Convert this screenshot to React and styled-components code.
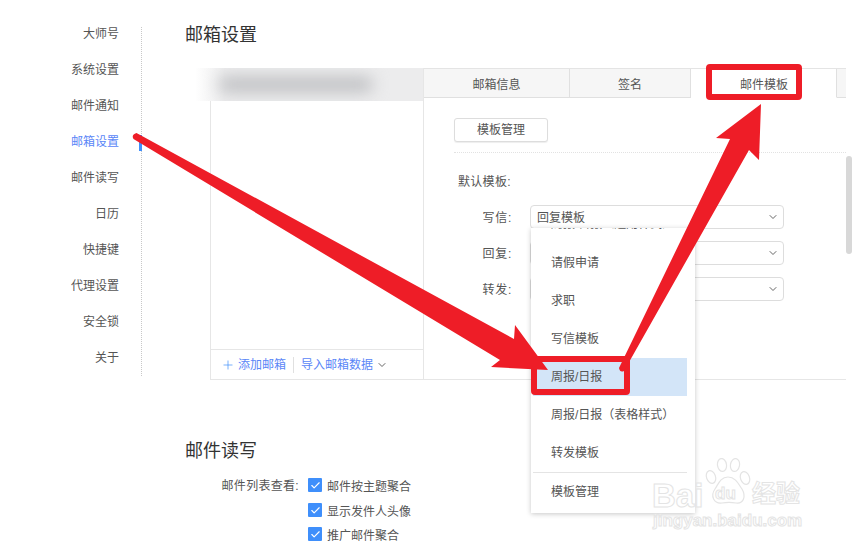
import React from 'react';
import styled, { createGlobalStyle } from 'styled-components';
import { ChevronDown, Plus, Check } from 'lucide-react';

const GlobalStyle = createGlobalStyle`
  html, body {
    margin: 0;
    padding: 0;
    background: #fff;
    overflow: hidden;
  }
  body {
    font-family: "Liberation Sans", "Noto Sans CJK SC", sans-serif;
    font-size: 12px;
    color: #555;
  }
`;

const Page = styled.div`
  position: relative;
  display: flex;
  align-items: flex-start;
  width: 852px;
  height: 550px;
  overflow: hidden;
`;

const Sidebar = styled.nav`
  display: flex;
  flex-direction: column;
  gap: 24px;
  flex: none;
  box-sizing: border-box;
  width: 142px;
  margin-top: 27px;
  padding: 0 22px 13px 0;
  border-right: 1px dotted #c8c8c8;
`;

const NavItem = styled.div`
  position: relative;
  height: 12px;
  line-height: 14px;
  text-align: right;
  color: ${(p) => (p.$active ? '#5a86f7' : '#555')};

  ${(p) =>
    p.$active &&
    `
    &::after {
      content: '';
      position: absolute;
      top: 0;
      right: -23px;
      width: 3px;
      height: 16px;
      background: #3f8ffb;
    }
  `}
`;

const Main = styled.main`
  flex: 1;
  padding: 26px 0 0 43px;
`;

const Title = styled.h2`
  margin: 0;
  height: 18px;
  line-height: 18px;
  font-size: 18px;
  font-weight: 400;
  color: #333;
`;

const Panel = styled.section`
  position: relative;
  display: flex;
  box-sizing: border-box;
  width: 636px;
  height: 312px;
  margin: 24px 0 62px 25px;
  border-bottom: 1px solid #e6e6e6;
`;

const AccountCol = styled.div`
  display: flex;
  flex-direction: column;
  justify-content: flex-end;
  flex: none;
  box-sizing: border-box;
  width: 214px;
  border-left: 1px solid #e6e6e6;
  border-right: 1px solid #e6e6e6;
`;

const BlurredAccount = styled.div`
  position: absolute;
  top: 0;
  left: -15px;
  width: 228px;
  height: 33px;
  overflow: hidden;
  background: linear-gradient(90deg, #fff 0, #ececed 30px, #ececed 100%);

  &::after {
    content: '';
    position: absolute;
    top: 9px;
    left: 24px;
    width: 154px;
    height: 15px;
    border-radius: 7px;
    background: #bdbec1;
    filter: blur(8px);
  }
`;

const AccountFooter = styled.div`
  display: flex;
  align-items: center;
  box-sizing: border-box;
  height: 30px;
  padding-left: 10px;
  border-top: 1px solid #e6e6e6;
  line-height: 16px;
  color: #5a86f7;
`;

const AddLabel = styled.span`
  margin-left: 3px;
  padding-right: 7px;
  border-right: 1px solid #e0e0e0;
`;

const ImportLabel = styled.span`
  margin-left: 7px;
  margin-right: 3px;
`;

const SettingsCol = styled.div`
  flex: 1;
  min-width: 0;
`;

const Tabs = styled.div`
  display: flex;
  box-sizing: border-box;
  height: 30px;
  border-top: 1px solid #e4e4e4;
`;

const Tab = styled.div`
  display: flex;
  align-items: center;
  justify-content: ${(p) => (p.$end ? 'flex-end' : 'center')};
  flex: ${(p) => (p.$width ? `0 0 ${p.$width}px` : 1)};
  box-sizing: border-box;
  padding-right: ${(p) => (p.$end ? '48px' : 0)};
  background: ${(p) => (p.$active ? '#fff' : '#f6f6f6')};
  border-right: 1px solid #e0e0e0;
  border-bottom: 1px solid ${(p) => (p.$active ? '#fff' : '#e0e0e0')};
  color: #555;

  &:last-child {
    border-right: 0;
  }
`;

const SettingsBody = styled.div`
  padding: 20px 0 0 30px;
`;

const GhostButton = styled.button`
  display: block;
  box-sizing: border-box;
  width: 94px;
  height: 24px;
  padding: 0 0 3px;
  border: 1px solid #ddd;
  border-radius: 3px;
  background: #fff;
  box-shadow: 0 1px 1px #eee;
  font: inherit;
  color: #555;
`;

const DottedRule = styled.div`
  margin-top: 10px;
  border-top: 1px dotted #e2e2e2;
`;

const FieldHeading = styled.div`
  margin: 21px 0 0 4px;
  height: 16px;
  line-height: 16px;
  letter-spacing: 0.3px;
  color: #555;
`;

const FieldList = styled.div`
  display: flex;
  flex-direction: column;
  gap: 12px;
  margin-top: 15px;
`;

const FieldRow = styled.div`
  display: flex;
  align-items: center;
`;

const FieldLabel = styled.label`
  box-sizing: border-box;
  width: 58px;
  margin-right: 18px;
  padding-bottom: 1px;
  text-align: right;
  letter-spacing: 0.7px;
  color: #555;
`;

const SelectBox = styled.div`
  position: relative;
  display: flex;
  align-items: center;
  justify-content: space-between;
  box-sizing: border-box;
  width: 254px;
  height: 24px;
  padding: 0 4px 0 6px;
  border: 1px solid #ddd;
  border-radius: 4px;
  background: #fff;
  color: #555;
`;

const SelectValue = styled.span`
  padding-bottom: 2px;
`;

const Dropdown = styled.div`
  position: absolute;
  z-index: 2;
  top: 22px;
  left: 0;
  box-sizing: border-box;
  width: 164px;
  height: 285px;
  padding: 0 8px 0 2px;
  overflow: hidden;
  background: #fff;
  box-shadow: 0 1px 5px rgba(0, 0, 0, 0.22);
`;

const OptionList = styled.div`
  height: 244px;
  overflow: hidden;
`;

const Option = styled.div`
  display: flex;
  align-items: center;
  box-sizing: border-box;
  height: 38px;
  padding: 0 0 3px 18px;
  background: ${(p) => (p.$active ? '#d3e5f8' : 'transparent')};
  color: #555;
  white-space: nowrap;
`;

const ClippedOption = styled(Option)`
  margin-top: -23px;
  margin-bottom: 1px;
`;

const DropdownDivider = styled.div`
  border-top: 1px solid #e4e4e4;
`;

const Scrollbar = styled.div`
  position: absolute;
  top: 156px;
  right: 0;
  width: 6px;
  height: 98px;
  border-radius: 3px;
  background: #d8d8d8;
`;

const CheckGroup = styled.div`
  display: grid;
  grid-template-columns: 114px auto;
  column-gap: 9px;
  row-gap: 10px;
  justify-content: start;
  margin-top: 18px;
  color: #555;
`;

const CheckLabel = styled.div`
  grid-column: 1;
  height: 14px;
  line-height: 14px;
  padding-top: 1px;
  text-align: right;
  letter-spacing: 0.3px;
`;

const CheckItem = styled.div`
  grid-column: 2;
  display: flex;
  align-items: center;
  gap: 5px;
  height: 14px;
  white-space: nowrap;
`;

const CheckBox = styled.span`
  display: flex;
  align-items: center;
  justify-content: center;
  width: 14px;
  height: 14px;
  border-radius: 1px;
  background: #3f8ffb;
  color: #fff;
`;

const Annotation = styled.svg`
  position: absolute;
  z-index: 5;
  top: 0;
  left: 0;
  pointer-events: none;
`;

const Watermark = styled.div`
  position: absolute;
  z-index: 6;
  top: 458px;
  left: 652px;
  width: 156px;
  height: 74px;
  pointer-events: none;
`;

const Paw = styled.svg`
  position: absolute;
  top: 0;
  left: 52px;
`;

const WatermarkLogo = styled.div`
  position: absolute;
  top: 18px;
  font-family: "Liberation Sans", sans-serif;
  font-size: ${(p) => p.$size}px;
  font-weight: 700;
  line-height: 1.2;
  left: ${(p) => p.$left}px;
  color: #fff;
  -webkit-text-stroke: 1px #e4e4e4;
  white-space: nowrap;
`;

const WatermarkDu = styled(WatermarkLogo)`
  top: 26px;
`;

const WatermarkCn = styled(WatermarkLogo)`
  top: 20px;
  font-family: "Noto Sans CJK SC", sans-serif;
`;

const WatermarkUrl = styled.div`
  position: absolute;
  top: 53px;
  left: 1px;
  font-family: "Liberation Sans", sans-serif;
  font-size: 17px;
  font-weight: 700;
  line-height: 20px;
  color: #fff;
  -webkit-text-stroke: 1px #e4e4e4;
  white-space: nowrap;
`;

const navItems = ['大师号', '系统设置', '邮件通知', '邮箱设置', '邮件读写', '日历', '快捷键', '代理设置', '安全锁', '关于'];
const options = ['请假申请', '求职', '写信模板', '周报/日报', '周报/日报（表格样式）', '转发模板'];
const checks = ['邮件按主题聚合', '显示发件人头像', '推广邮件聚合'];

function App() {
  return (
    <Page>
      <GlobalStyle />
      <Sidebar>
        {navItems.map((item) => (
          <NavItem key={item} $active={item === '邮箱设置'}>
            {item}
          </NavItem>
        ))}
      </Sidebar>

      <Main>
        <Title>邮箱设置</Title>
        <Panel>
          <BlurredAccount />
          <AccountCol>
            <AccountFooter>
              <Plus size={14} strokeWidth={1.2} color="#3f8ffb" />
              <AddLabel>添加邮箱</AddLabel>
              <ImportLabel>导入邮箱数据</ImportLabel>
              <ChevronDown size={12} color="#666" />
            </AccountFooter>
          </AccountCol>

          <SettingsCol>
            <Tabs>
              <Tab $width={146}>邮箱信息</Tab>
              <Tab $width={121}>签名</Tab>
              <Tab $width={146} $active $end>邮件模板</Tab>
              <Tab />
            </Tabs>
            <SettingsBody>
              <GhostButton>模板管理</GhostButton>
              <DottedRule />
              <FieldHeading>默认模板:</FieldHeading>
              <FieldList>
                <FieldRow>
                  <FieldLabel>写信:</FieldLabel>
                  <SelectBox>
                    <SelectValue>回复模板</SelectValue>
                    <ChevronDown size={12} color="#666" />
                    <Dropdown>
                      <OptionList>
                        <ClippedOption>周报/日报（通用样式）</ClippedOption>
                        {options.map((o) => (
                          <Option key={o} $active={o === '周报/日报'}>
                            {o}
                          </Option>
                        ))}
                      </OptionList>
                      <DropdownDivider />
                      <Option>模板管理</Option>
                    </Dropdown>
                  </SelectBox>
                </FieldRow>
                <FieldRow>
                  <FieldLabel>回复:</FieldLabel>
                  <SelectBox>
                    <span />
                    <ChevronDown size={12} color="#666" />
                  </SelectBox>
                </FieldRow>
                <FieldRow>
                  <FieldLabel>转发:</FieldLabel>
                  <SelectBox>
                    <span />
                    <ChevronDown size={12} color="#666" />
                  </SelectBox>
                </FieldRow>
              </FieldList>
            </SettingsBody>
          </SettingsCol>
        </Panel>

        <Title>邮件读写</Title>
        <CheckGroup>
          <CheckLabel>邮件列表查看:</CheckLabel>
          {checks.map((c) => (
            <CheckItem key={c}>
              <CheckBox>
                <Check size={11} strokeWidth={2.5} />
              </CheckBox>
              {c}
            </CheckItem>
          ))}
        </CheckGroup>
      </Main>

      <Scrollbar />

      <Annotation width="852" height="550" viewBox="0 0 852 550" fill="none">
        <rect x="534" y="359" width="93" height="33" rx="1" stroke="#ee1d27" strokeWidth="6" />
        <rect x="709" y="67" width="90" height="30" rx="1" stroke="#ee1d27" strokeWidth="6" />
        <path
          d="M136.5 133 L514 339 L515 325 L548 370 L491 367 L500 360 L133.5 139 Q131 135 136.5 133 Z"
          fill="#ee1d27"
        />
        <path
          d="M619 368 L730 139 L716 138 L761 104 L759 160 L749 150 L624 371 Q620 373 619 368 Z"
          fill="#ee1d27"
        />
      </Annotation>

      <Watermark>
        <Paw width="60" height="48" viewBox="0 0 60 48" fill="#fff" stroke="#e4e4e4" strokeWidth="1.2">
          <ellipse cx="7" cy="19" rx="4.5" ry="6.5" transform="rotate(-20 7 19)" />
          <ellipse cx="18" cy="7" rx="4.5" ry="6.5" transform="rotate(-8 18 7)" />
          <ellipse cx="31" cy="7" rx="4.5" ry="6.5" transform="rotate(10 31 7)" />
          <ellipse cx="41" cy="20" rx="4.5" ry="6.5" transform="rotate(-20 41 20)" />
          <path d="M24 19 C16 19 14 27 11 31 C6 38 10 46 18 45 C23 44 27 44 32 45 C40 46 42 38 38 31 C35 27 32 19 24 19 Z" />
        </Paw>
        <WatermarkLogo $size={33} $left={0}>Bai</WatermarkLogo>
        <WatermarkDu $size={17} $left={63}>du</WatermarkDu>
        <WatermarkCn $size={24} $left={100}>经验</WatermarkCn>
        <WatermarkUrl>jingyan.baidu.com</WatermarkUrl>
      </Watermark>
    </Page>
  );
}

export default App;
